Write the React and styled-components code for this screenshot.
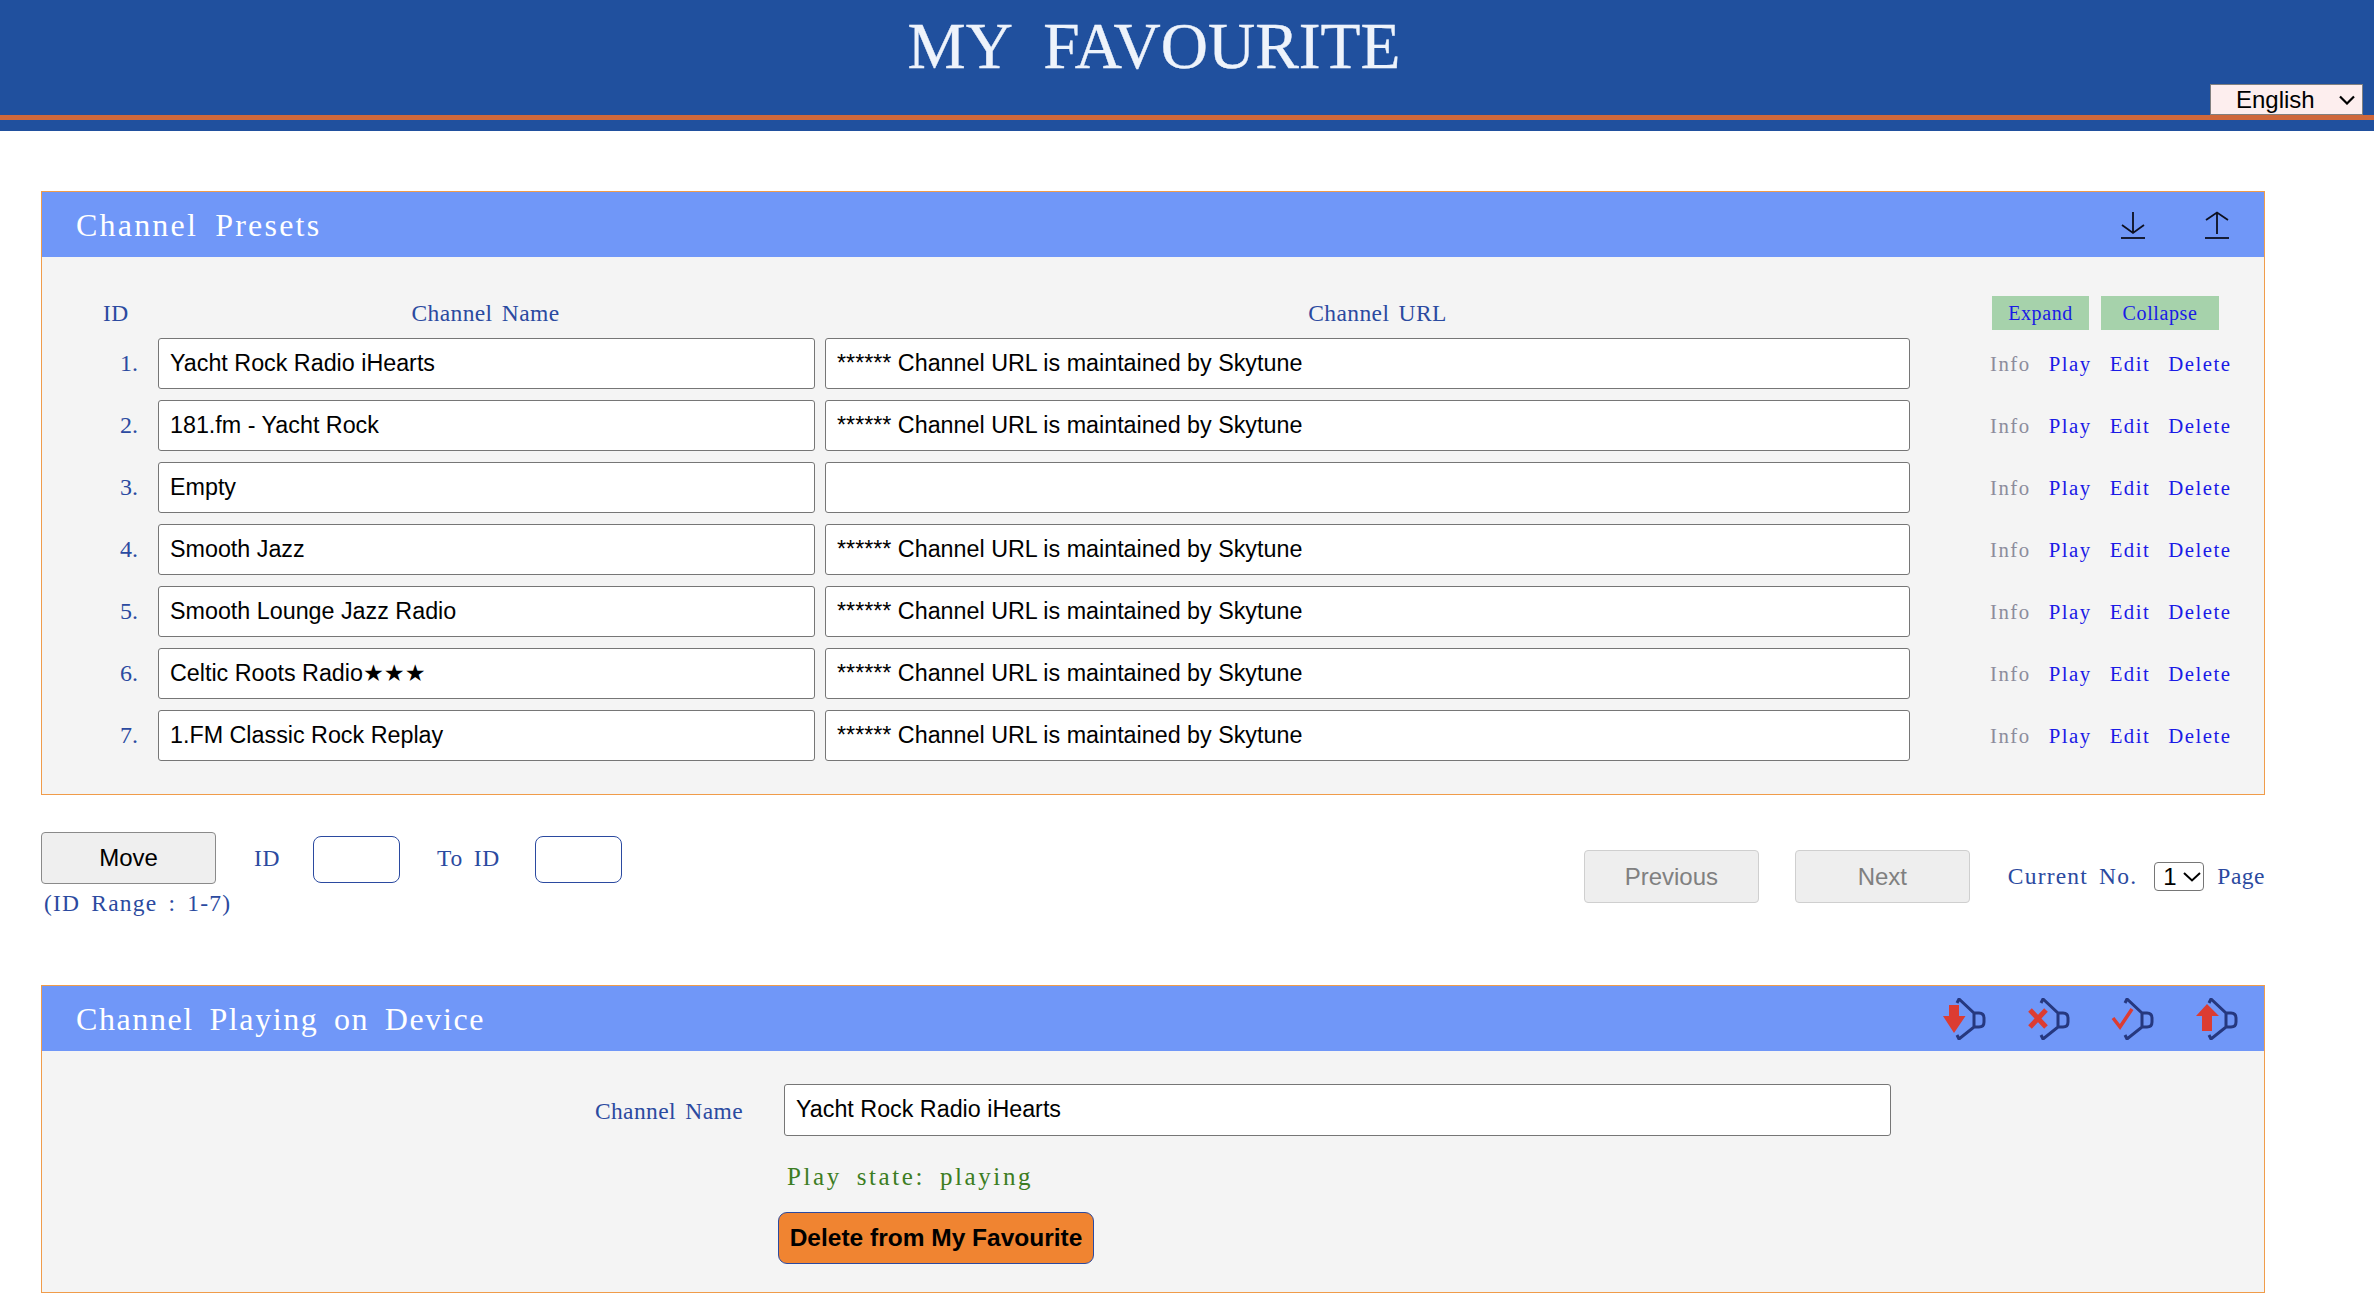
import React from 'react';
import styled, { createGlobalStyle } from 'styled-components';

const GlobalStyle = createGlobalStyle`
  html, body { margin: 0; padding: 0; background: #fff; }
  body { font-family: "Liberation Sans", Arial, sans-serif; }
  * { box-sizing: border-box; }
`;

const serif = `"Liberation Serif", "Times New Roman", serif`;
const sans = `"Liberation Sans", "DejaVu Sans", Arial, sans-serif`;
const navy = '#2b4aa0';

const Banner = styled.header`
  background: #20509e;
  height: 131px;
`;

const BannerTop = styled.div`
  position: relative;
  height: 115px;
  display: flex;
  justify-content: center;
  padding-right: 66px;
`;

const Title = styled.h1`
  margin: 0;
  font-family: ${serif};
  font-weight: 400;
  font-size: 65.4px;
  line-height: 92px;
  color: #eef3fb;
  white-space: pre;
  -webkit-text-stroke: 0.4px #eef3fb;
`;

const LangWrap = styled.div`
  position: absolute;
  right: 11px;
  bottom: 0;
  width: 153px;
  height: 31px;
`;

const LangSelect = styled.select`
  appearance: none;
  display: block;
  width: 100%;
  height: 100%;
  background: #fdeeee;
  border: 1px solid #808080;
  border-radius: 0;
  font-family: ${sans};
  font-size: 24px;
  color: #000;
  padding: 0 0 0 25px;
`;

const Chevron = styled.svg`
  position: absolute;
  right: ${p => p.$right}px;
  top: ${p => p.$top}px;
  pointer-events: none;
`;

const Stripe = styled.div`
  height: 5px;
  background: #cf683b;
`;

const Page = styled.main`
  padding: 60px 109px 12px 41px;
`;

const Panel = styled.section`
  border: 1px solid #f09c4a;
  background: #f4f4f4;
`;

const PanelHead = styled.div`
  height: 65px;
  background: #7097f8;
  display: flex;
  align-items: center;
  justify-content: space-between;
  padding: 0 ${p => p.$right}px 0 34px;
`;

const PanelTitle = styled.h2`
  margin: 0;
  font-family: ${serif};
  font-weight: 400;
  font-size: 32px;
  letter-spacing: ${p => p.$ls}px;
  word-spacing: ${p => p.$ws}px;
  color: #fff;
  line-height: 44px;
`;

const HeadIcons = styled.div`
  display: flex;
  align-items: center;
  gap: ${p => p.$gap}px;
`;

const PresetBody = styled.div`
  padding: 39px 0 33px;
`;

const Row = styled.div`
  display: grid;
  grid-template-columns: 116px 667px 1085px 1fr;
  align-items: center;
  height: 51px;
  margin-bottom: ${p => (p.$last ? 0 : 11)}px;
`;

const HeadRow = styled(Row)`
  height: 34px;
  margin-bottom: 8px;
`;

const ColLabel = styled.div`
  font-family: ${serif};
  font-size: 23.5px;
  letter-spacing: 0.4px;
  word-spacing: 3px;
  color: ${navy};
  text-align: ${p => p.$align || 'center'};
  padding: 0 ${p => p.$pr || 0}px 0 ${p => p.$pl || 0}px;
`;

const Num = styled.div`
  font-family: ${serif};
  font-size: 24px;
  color: ${navy};
  text-align: right;
  padding-right: 20px;
`;

const TextBox = styled.input`
  display: block;
  width: ${p => p.$w}px;
  height: ${p => p.$h || 51}px;
  margin-left: ${p => p.$ml || 0}px;
  padding: 0 11px 1px;
  border: 1px solid #767676;
  border-radius: 3px;
  background: #fff;
  color: #000;
  font-family: ${sans};
  font-size: 23.3px;
  outline: none;
`;

const Tools = styled.div`
  display: flex;
  gap: 12px;
  padding-left: 82px;
`;

const ToolBtn = styled.button`
  height: 34px;
  width: ${p => p.$w}px;
  padding: 0;
  border: 0;
  background: #a6d2ab;
  color: #1a1ae6;
  font-family: ${serif};
  font-size: 20px;
  letter-spacing: 0.6px;
`;

const Actions = styled.div`
  display: flex;
  gap: 18px;
  padding-left: 80px;
`;

const ActionLink = styled.a`
  font-family: ${serif};
  font-size: 20.8px;
  letter-spacing: 1.5px;
  color: ${p => (p.$muted ? '#8c8c9c' : '#1a1ae6')};
  cursor: pointer;
`;

const MoveBar = styled.div`
  display: flex;
  justify-content: space-between;
  align-items: flex-start;
  height: 190px;
  padding-top: 37px;
`;

const MoveCol = styled.div`
  display: flex;
  flex-direction: column;
`;

const MoveRow = styled.div`
  display: flex;
  align-items: center;
  height: 52px;
`;

const PlainBtn = styled.button`
  width: 175px;
  height: ${p => p.$h}px;
  margin-left: ${p => p.$ml || 0}px;
  border: 1px solid ${p => (p.disabled ? '#cfcfcf' : '#8a8a8a')};
  border-radius: 4px;
  background: ${p => (p.disabled ? '#eeeeee' : '#efefef')};
  color: ${p => (p.disabled ? '#808080' : '#000')};
  font-family: ${sans};
  font-size: 24px;
  padding: 0;
`;

const BlueText = styled.span`
  font-family: ${serif};
  font-size: 23.5px;
  letter-spacing: ${p => p.$ls ?? 1.2}px;
  word-spacing: 4px;
  color: ${navy};
  margin: ${p => p.$m || '0'};
  white-space: pre;
`;

const SmallBox = styled.input`
  width: 87px;
  height: 47px;
  margin-top: 3px;
  border: 1px solid #2b4aa0;
  border-radius: 8px;
  background: #fff;
  outline: none;
`;

const RangeNote = styled(BlueText)`
  margin: 6px 0 0 3px;
  line-height: 27px;
`;

const Pager = styled.div`
  display: flex;
  align-items: center;
  height: 53px;
  margin-top: 18px;
`;

const PageWrap = styled.div`
  position: relative;
  width: 50px;
  height: 29px;
  margin: 0 13px 0 17px;
`;

const PageSelect = styled.select`
  appearance: none;
  display: block;
  width: 100%;
  height: 100%;
  padding: 0 0 0 8px;
  border: 1px solid #767676;
  border-radius: 4px;
  background: #fff;
  color: #000;
  font-family: ${sans};
  font-size: 24px;
`;

const PlayBody = styled.div`
  height: 241px;
  padding-top: 33px;
  display: flex;
  flex-direction: column;
`;

const FieldRow = styled.div`
  display: flex;
  align-items: center;
`;

const FieldLabel = styled.span`
  width: 701px;
  text-align: right;
  font-family: ${serif};
  font-size: 23.5px;
  letter-spacing: 0.4px;
  word-spacing: 3px;
  color: ${navy};
  margin-top: 2px;
`;

const PlayState = styled.div`
  font-family: ${serif};
  font-size: 25px;
  letter-spacing: 2.6px;
  word-spacing: 6px;
  line-height: 26px;
  color: #3c7d22;
  margin: 28px 0 22px 745px;
`;

const DeleteBtn = styled.button`
  width: 316px;
  height: 52px;
  margin-left: 736px;
  padding: 0;
  border: 1px solid #2b4aa0;
  border-radius: 9px;
  background: #f08431;
  color: #000;
  font-family: ${sans};
  font-weight: 700;
  font-size: 24.5px;
`;

const SpeakerSvg = styled.svg`
  filter: blur(0.4px);
`;

const rows = [
  ['Yacht Rock Radio iHearts', true],
  ['181.fm - Yacht Rock', true],
  ['Empty', false],
  ['Smooth Jazz', true],
  ['Smooth Lounge Jazz Radio', true],
  ['Celtic Roots Radio★★★', true],
  ['1.FM Classic Rock Replay', true],
];

const urlNote = '****** Channel URL is maintained by Skytune';

const Download = () => (
  <svg width="24" height="28" viewBox="0 0 24 28" fill="none" stroke="#0d1020" strokeWidth="1.8">
    <path d="M12 1V22M1 14L12 22L23 14" />
    <path d="M0 27H24" />
  </svg>
);

const Upload = () => (
  <svg width="24" height="28" viewBox="0 0 24 28" fill="none" stroke="#0d1020" strokeWidth="1.8">
    <path d="M12 2V23M1 9L12 1.5L23 9" />
    <path d="M0 27H24" />
  </svg>
);

// speaker outline shared by the four device icons, the red mark goes on top
const Speaker = ({ children }) => (
  <SpeakerSvg width="43" height="42" viewBox="0 0 43 42" fill="none">
    <path
      d="M14 5L16 1L31 15H36Q41 15 41 20V24Q41 29 36 29H31L16 41L14 37M31 15V29"
      stroke="#26387f"
      strokeWidth="3"
    />
    {children}
  </SpeakerSvg>
);

const PresetRow = ({ index, name, hasUrl, last }) => (
  <Row $last={last}>
    <Num>{index}.</Num>
    <TextBox $w={657} readOnly value={name} />
    <TextBox $w={1085} readOnly value={hasUrl ? urlNote : ''} />
    <Actions>
      <ActionLink $muted>Info</ActionLink>
      <ActionLink>Play</ActionLink>
      <ActionLink>Edit</ActionLink>
      <ActionLink>Delete</ActionLink>
    </Actions>
  </Row>
);

export default function App() {
  return (
    <>
      <GlobalStyle />
      <Banner>
        <BannerTop>
          <Title>MY  FAVOURITE</Title>
          <LangWrap>
            <LangSelect defaultValue="English">
              <option>English</option>
            </LangSelect>
            <Chevron $right={8} $top={11} width="16" height="10" viewBox="0 0 16 10" fill="none" stroke="#000" strokeWidth="2.2">
              <path d="M1 1.5L8 8.5L15 1.5" />
            </Chevron>
          </LangWrap>
        </BannerTop>
        <Stripe />
      </Banner>
      <Page>
        <Panel>
          <PanelHead $right={35}>
            <PanelTitle $ls={2.2} $ws={7}>Channel Presets</PanelTitle>
            <HeadIcons $gap={60}>
              <Download />
              <Upload />
            </HeadIcons>
          </PanelHead>
          <PresetBody>
            <HeadRow>
              <ColLabel $align="left" $pl={61}>ID</ColLabel>
              <ColLabel $pr={12}>Channel Name</ColLabel>
              <ColLabel $pl={20}>Channel URL</ColLabel>
              <Tools>
                <ToolBtn $w={97}>Expand</ToolBtn>
                <ToolBtn $w={118}>Collapse</ToolBtn>
              </Tools>
            </HeadRow>
            {rows.map(([name, hasUrl], i) => (
              <PresetRow key={i} index={i + 1} name={name} hasUrl={hasUrl} last={i === rows.length - 1} />
            ))}
          </PresetBody>
        </Panel>

        <MoveBar>
          <MoveCol>
            <MoveRow>
              <PlainBtn $h={52}>Move</PlainBtn>
              <BlueText $m="0 33px 0 38px" $ls={0.6}>ID</BlueText>
              <SmallBox />
              <BlueText $m="0 35px 0 37px" $ls={0.8}>To ID</BlueText>
              <SmallBox />
            </MoveRow>
            <RangeNote>(ID Range : 1-7)</RangeNote>
          </MoveCol>
          <Pager>
            <PlainBtn disabled $h={53}>Previous</PlainBtn>
            <PlainBtn disabled $h={53} $ml={36}>Next</PlainBtn>
            <BlueText $m="0 0 0 38px">Current No.</BlueText>
            <PageWrap>
              <PageSelect defaultValue="1">
                <option>1</option>
              </PageSelect>
              <Chevron $right={3} $top={10} width="18" height="10" viewBox="0 0 18 10" fill="none" stroke="#000" strokeWidth="2">
                <path d="M1 1L9 8.5L17 1" />
              </Chevron>
            </PageWrap>
            <BlueText $ls={0.5}>Page</BlueText>
          </Pager>
        </MoveBar>

        <Panel>
          <PanelHead $right={26}>
            <PanelTitle $ls={1.6} $ws={6}>Channel Playing on Device</PanelTitle>
            <HeadIcons $gap={41}>
              <Speaker>
                <path d="M6 7H16V18H22.5L11 35L0 18H6Z" fill="#dc3c32" />
              </Speaker>
              <Speaker>
                <path d="M3 12L19 29M19 12L3 29" stroke="#dc3c32" strokeWidth="5" />
              </Speaker>
              <Speaker>
                <path d="M2 20L9 29L21 11" stroke="#dc3c32" strokeWidth="3.5" />
              </Speaker>
              <Speaker>
                <path d="M12 6L24 18H17V33H7V18H1Z" fill="#dc3c32" />
              </Speaker>
            </HeadIcons>
          </PanelHead>
          <PlayBody>
            <FieldRow>
              <FieldLabel>Channel Name</FieldLabel>
              <TextBox $w={1107} $h={52} $ml={41} readOnly value="Yacht Rock Radio iHearts" />
            </FieldRow>
            <PlayState>Play state: playing</PlayState>
            <DeleteBtn>Delete from My Favourite</DeleteBtn>
          </PlayBody>
        </Panel>
      </Page>
    </>
  );
}
